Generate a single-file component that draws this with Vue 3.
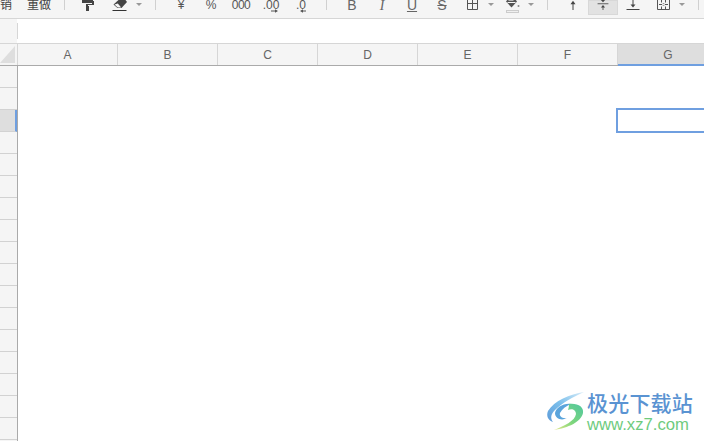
<script setup>
const columns = ['A', 'B', 'C', 'D', 'E', 'F', 'G']
const rows = Array.from({ length: 17 }, (_, i) => i)
const activeRow = 2
</script>

<template>
  <div class="sheet">
    <!-- 工具栏 -->
    <div class="toolbar">
      <span class="label undo">撤销</span>
      <span class="label redo">重做</span>
      <i class="sep sep1"></i>

      <span class="tool paint">
        <svg width="16" height="18" viewBox="0 0 16 18">
          <path d="M2 0h11v1h1v4H8v1H9v5H6V4h6V3H2z" fill="#444" />
        </svg>
      </span>
      <span class="tool erase">
        <svg width="18" height="18" viewBox="0 0 18 18">
          <path d="M7.500 0h7l1.500 2-5.500 6H6.500L2.500 4.500z" fill="#444" />
          <path d="M3.500 4.500L6.800 7.600h3.400L6.800 3.600z" fill="#f5f5f5" />
          <path d="M1.500 10.500h14" stroke="#333" />
        </svg>
      </span>
      <i class="caret"></i>
      <i class="sep sep2"></i>

      <span class="tool text currency">¥</span>
      <span class="tool text">%</span>
      <span class="tool text zeros">000</span>
      <span class="tool dec">
        <span>.00</span>
        <svg width="14" height="4" viewBox="0 0 14 4"><path d="M7 2h5" stroke="#555" /><path d="M11 .2L14 2l-3 1.800z" fill="#555" /></svg>
      </span>
      <span class="tool dec">
        <span>.0</span>
        <svg width="14" height="4" viewBox="0 0 14 4"><path d="M8 2h4" stroke="#555" /><path d="M9 .2L6 2l3 1.800z" fill="#555" /></svg>
      </span>
      <i class="sep sep3"></i>

      <span class="tool text big first-font">B</span>
      <span class="tool text big italic">I</span>
      <span class="tool text big under">U</span>
      <span class="tool text big strike">S</span>
      <span class="tool">
        <svg width="14" height="18" viewBox="0 0 14 18">
          <path d="M2.500-1V9.500H12.500V-1M2.500 3.500H12.500M7.500-1V9.500" fill="none" stroke="#555" />
        </svg>
      </span>
      <i class="caret"></i>
      <span class="tool fill">
        <svg width="16" height="18" viewBox="0 0 16 18">
          <path d="M2 1.500L7.500 7.500 13 1.500 11-1H4z" fill="#555" />
          <path d="M3.500 2.500h8" stroke="#f5f5f5" />
          <path d="M4.500 0.500h5" stroke="#f5f5f5" stroke-width=".6" />
          <circle cx="14.500" cy="6" r="1" fill="#888" />
          <rect x="2.500" y="10.500" width="12" height="2" fill="#f0f0f0" stroke="#ccc" />
        </svg>
      </span>
      <i class="caret"></i>
      <i class="sep sep4"></i>

      <span class="tool align-top">
        <svg width="14" height="18" viewBox="0 0 14 18"><path d="M7 10V3" stroke="#444" /><path d="M7 .8L4.500 4.300h5z" fill="#444" /></svg>
      </span>
      <span class="tool active">
        <svg width="14" height="18" viewBox="0 0 14 18">
          <path d="M7 8v4M.5 4.500h13" stroke="#444" />
          <path d="M4.500 0h5L7 2.800zM7 6L4.500 9h5z" fill="#444" />
        </svg>
      </span>
      <span class="tool">
        <svg width="14" height="18" viewBox="0 0 14 18"><path d="M7 0v5M.5 9.500h13" stroke="#444" /><path d="M4.500 4.500h5L7 7.500z" fill="#444" /></svg>
      </span>
      <span class="tool">
        <svg width="14" height="18" viewBox="0 0 14 18">
          <path d="M1.500-1V9.500h12V-1M5.500-1V2.500M5.500 6.500V9.500M9.500-1V2.500M9.500 6.500V9.500M3 4.500h3M9 4.500h3" fill="none" stroke="#555" />
          <path d="M6.800 3L8.300 4.500 6.800 6zM8.200 3L6.700 4.500 8.200 6z" fill="#555" />
        </svg>
      </span>
      <i class="caret"></i>
      <i class="sep sep5"></i>
    </div>

    <!-- 编辑栏 -->
    <div class="formula">
      <div class="formula-left"></div>
    </div>

    <!-- 列头 -->
    <div class="col-head">
      <div class="corner"><i></i></div>
      <div
        v-for="col in columns"
        :key="col"
        class="col"
        :class="{ selected: col === 'G' }"
      >{{ col }}</div>
    </div>

    <!-- 表格 -->
    <div class="body">
      <div class="row-head">
        <div
          v-for="r in rows"
          :key="r"
          class="row"
          :class="{ selected: r === activeRow }"
        ></div>
      </div>
      <div class="canvas">
        <div class="cell-box"></div>
      </div>
    </div>

    <!-- 水印 -->
    <div class="logo">
      <svg class="swirl" width="48" height="46" viewBox="0 0 48 46">
        <defs>
          <linearGradient id="blueArc" x1="1" y1="0" x2="0" y2="1">
            <stop offset="0" stop-color="#d8ecf8" />
            <stop offset=".5" stop-color="#7cc0ec" />
            <stop offset="1" stop-color="#5c9ad8" />
          </linearGradient>
          <linearGradient id="greenArc" x1="1" y1="0" x2="0" y2="1">
            <stop offset="0" stop-color="#4fc7a0" />
            <stop offset=".55" stop-color="#7ed67c" />
            <stop offset="1" stop-color="#e8e88a" />
          </linearGradient>
        </defs>
        <path d="M42 3C28 5 12 12 6 22c-2 5 0 9 5 11-3-4-2-8 2-12C20 14 31 8 42 3z" fill="url(#blueArc)" />
        <path d="M29 15c-8-1-15 4-16 9 0 6 7 8 12 5-5 1-8-2-7-5 2-4 6-7 11-9z" fill="#5aa4dc" />
        <path d="M27 15c9-1 15 3 14 9-2 9-15 15-29 17 10-4 21-9 22-16 0-4-4-6-8-4 1-3 1-5 1-6z" fill="url(#greenArc)" />
      </svg>
      <div class="logo-text">
        <div class="logo-cn">极光下载站</div>
        <div class="logo-en">www.xz7.com</div>
      </div>
    </div>
  </div>
</template>

<style>
html, body {
  margin: 0;
  background: #fff;
}
</style>

<style scoped>
.sheet {
  position: relative;
  width: 704px;
  height: 441px;
  overflow: hidden;
  background: #fff;
  font-family: "Liberation Sans", "Noto Sans CJK SC", sans-serif;
  color: #666;
}

.toolbar {
  display: flex;
  align-items: stretch;
  height: 18px;
  background: #f5f5f5;
  border-bottom: 1px solid #d6d6d6;
  overflow: hidden;
}
.label {
  flex-shrink: 0;
  width: 24px;
  font-size: 12px;
  line-height: 10px;
  color: #444;
  white-space: nowrap;
}
.undo {
  margin-left: -12px;
}
.redo {
  margin-left: 15px;
}
.sep {
  flex-shrink: 0;
  width: 1px;
  height: 10px;
  background: #d0d0d0;
}
.sep1 { margin-left: 13px; }
.sep2 { margin-left: 13px; }
.sep3 { margin-left: 10px; }
.sep4 { margin-left: 13px; }
.sep5 { margin-left: 13px; }

.tool {
  flex-shrink: 0;
  display: flex;
  flex-direction: column;
  align-items: center;
  width: 30px;
  height: 18px;
  overflow: hidden;
}
.paint { margin-left: 8px; }
.erase { margin-left: 2px; }
.text {
  font-size: 12px;
  line-height: 11px;
  color: #555;
}
.currency { margin-left: 10px; }
.zeros {
  letter-spacing: -.5px;
}
.dec {
  font-size: 12px;
  line-height: 10px;
  color: #555;
}
.dec svg {
  margin-top: -1px;
}
.big {
  font-size: 14px;
  line-height: 11px;
  color: #666;
}
.first-font { margin-left: 10px; }
.italic {
  font-style: italic;
  font-family: "Liberation Serif", serif;
}
.under {
  text-decoration: underline;
  text-underline-offset: 1px;
}
.strike {
  text-decoration: line-through;
}
.fill { margin-left: 3px; }
.align-top { margin-left: 10px; }
.active {
  height: 15px;
  background: #e2e2e2;
  box-shadow: inset 0 0 0 1px #d8d8d8;
}

.caret {
  flex-shrink: 0;
  align-self: flex-start;
  width: 0;
  height: 0;
  margin-top: 3px;
  margin-left: 1px;
  border-left: 3px solid transparent;
  border-right: 3px solid transparent;
  border-top: 3px solid #999;
}

.formula {
  height: 24px;
  border-bottom: 1px solid #d6d6d6;
  display: flex;
  align-items: center;
}
.formula-left {
  width: 17px;
  height: 100%;
  background: #f5f5f5;
  position: relative;
}
.formula-left::after {
  content: '';
  position: absolute;
  top: 4px;
  right: -1px;
  width: 1px;
  height: 16px;
  background: #d6d6d6;
}

.col-head {
  display: flex;
  height: 21px;
  background: #f5f5f5;
  border-bottom: 1px solid #aaa;
}
.corner {
  flex-shrink: 0;
  width: 17px;
  border-right: 1px solid #d6d6d6;
  position: relative;
}
.corner i {
  position: absolute;
  left: 0;
  top: 2px;
  width: 15px;
  height: 17px;
  background: #dedede;
  clip-path: polygon(100% 0, 100% 100%, 0 100%);
}
.col {
  flex-shrink: 0;
  box-sizing: border-box;
  width: 100px;
  height: 21px;
  line-height: 23px;
  text-align: center;
  font-size: 12px;
  color: #666;
  border-right: 1px solid #d6d6d6;
}
.col.selected {
  height: 22px;
  background: #dedede;
  border-right: 0;
  border-bottom: 2px solid #6f9fe0;
}

.body {
  display: flex;
}
.row-head {
  flex-shrink: 0;
  width: 17px;
  background: #f5f5f5;
  border-right: 1px solid #aaa;
}
.row {
  box-sizing: border-box;
  height: 22px;
  border-bottom: 1px solid #d2d2d2;
}
.row.selected {
  background: #dedede;
  border-right: 2px solid #6f9fe0;
}
.canvas {
  flex: 1;
  position: relative;
  height: 375px;
}
.cell-box {
  position: absolute;
  left: 598px;
  top: 42px;
  width: 100px;
  height: 21px;
  border: 2px solid #6f9fe0;
}

.logo {
  position: absolute;
  left: 542px;
  top: 389px;
  display: flex;
  align-items: flex-start;
}
.swirl {
  flex-shrink: 0;
}
.logo-text {
  margin-left: -3px;
}
.logo-cn {
  font-family: "Noto Sans CJK SC", sans-serif;
  font-size: 21px;
  font-weight: 500;
  line-height: 26px;
  letter-spacing: .2px;
  color: #5a93d2;
  white-space: nowrap;
}
.logo-en {
  font-size: 16.700px;
  line-height: 20px;
  color: #6ecb7d;
  white-space: nowrap;
}
</style>
